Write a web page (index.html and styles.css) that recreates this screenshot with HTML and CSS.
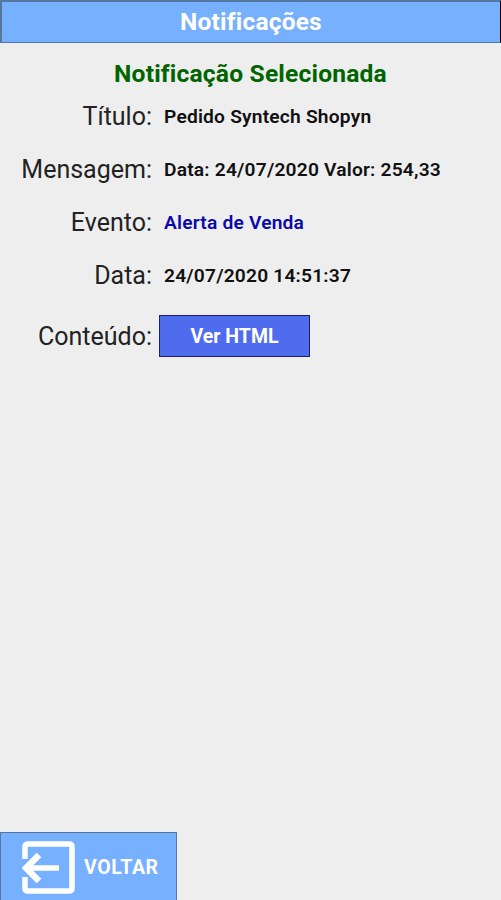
FILE: index.html
```html
<!DOCTYPE html>
<html lang="pt-BR">

<head>
  <meta charset="UTF-8" />
  <meta name="viewport" content="width=device-width, initial-scale=1.0" />
  <title>Notificações</title>
  <link rel="stylesheet" href="styles.css">
</head>

<body>
  <header class="topbar">
    <h1>Notificações</h1>
  </header>

  <main class="content">
    <h2>Notificação Selecionada</h2>

    <div class="details">
      <div class="row">
        <span class="label">Título:</span>
        <span class="value titulo">Pedido Syntech Shopyn</span>
      </div>
      <div class="row">
        <span class="label">Mensagem:</span>
        <span class="value mensagem">Data: 24/07/2020 Valor: 254,33</span>
      </div>
      <div class="row">
        <span class="label">Evento:</span>
        <span class="value evento">Alerta de Venda</span>
      </div>
      <div class="row">
        <span class="label">Data:</span>
        <span class="value data">24/07/2020 14:51:37</span>
      </div>
      <div class="row row-button">
        <span class="label">Conteúdo:</span>
        <button class="button">Ver HTML</button>
      </div>
    </div>
  </main>

  <footer>
    <button class="back">
      <svg class="back-icon" viewBox="0 0 54 54" width="54" height="54" fill="none" stroke="#fff">
        <path d="M3 18V6Q3 3 6 3H47Q50 3 50 6V47Q50 50 47 50H6Q3 50 3 47V36" stroke-width="5.5" />
        <path d="M37 27H5" stroke-width="5.5" />
        <path d="M17 14L4 27L17 40" stroke-width="6.5" />
      </svg>
      <span>VOLTAR</span>
    </button>
  </footer>
</body>

</html>
```
FILE: styles.css
```css
* {
  box-sizing: border-box;
}

html,
body {
  margin: 0;
  padding: 0;
  height: 100%;
  font-family: Roboto, sans-serif;
  font-variant-ligatures: none;
  background-color: #eee;
  overflow: hidden;
}

body {
  display: flex;
  flex-direction: column;
}

.topbar {
  height: 43px;
  background-color: #77b0ff;
  border: 2px solid #54779f;
  border-right: 1px solid #000;
  border-bottom-width: 1px;
  display: flex;
  align-items: center;
  justify-content: center;
}

h1 {
  margin: 0;
  color: #fff;
  font-size: 24.5px;
  font-weight: bold;
  letter-spacing: 0.2px;
  line-height: 28px;
}

.content {
  flex-grow: 1;
  padding-top: 16px;
}

h2 {
  margin: 0;
  color: #006400;
  font-size: 24.6px;
  font-weight: bold;
  letter-spacing: 0.18px;
  line-height: 30px;
  text-align: center;
}

.row {
  display: flex;
  align-items: center;
  height: 53px;
  padding-top: 1px;
}

.row-button {
  height: 70px;
  padding-top: 0;
}

.label {
  width: 152px;
  color: #222;
  font-size: 25px;
  font-weight: 400;
  text-align: right;
}

.value {
  margin-left: 12px;
  color: #111;
  font-size: 19.2px;
  font-weight: 600;
  letter-spacing: 0.2px;
  white-space: nowrap;
}

.evento {
  color: #0a0aa8;
}

.button {
  width: 151px;
  height: 42px;
  margin-left: 7px;
  padding: 0;
  border: 1px solid #1d2554;
  background-color: #506cee;
  color: #fff;
  font-family: inherit;
  font-size: 19.5px;
  font-weight: bold;
}

.back {
  display: flex;
  align-items: center;
  width: 177px;
  height: 68px;
  padding: 2px 0 0 21px;
  border: 1px solid #54779f;
  border-bottom: none;
  background-color: #77b0ff;
  color: #fff;
  font-family: inherit;
  font-size: 19.5px;
  font-weight: bold;
  letter-spacing: 0.6px;
}

.back-icon {
  margin-right: 8px;
}
```
